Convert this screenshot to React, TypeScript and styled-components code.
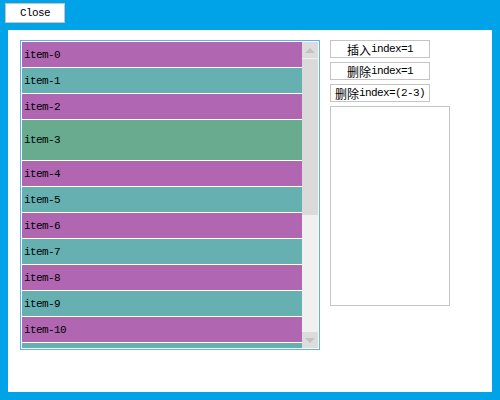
import React from 'react'
import styled, { createGlobalStyle } from 'styled-components'

const GlobalStyle = createGlobalStyle`
  html, body {
    margin: 0;
    padding: 0;
    background: #00a3e8;
  }
  body {
    width: 500px;
    height: 400px;
    overflow: hidden;
    font-family: "Liberation Mono", "Noto Sans CJK SC", monospace;
  }
`

const items = Array.from({ length: 12 }, (_, i) => i)

const itemColor = (i: number) => {
  if (i === 3) return '#68ab8e'
  return i % 2 === 0 ? '#b066b0' : '#66b0b2'
}

const App = () => {
  return (
    <Page>
      <GlobalStyle />
      <CloseButton>Close</CloseButton>
      <Panel>
        <ListBox>
          <ItemList>
            {items.map((i) => (
              <Item key={i} $bg={itemColor(i)} $tall={i === 3}>
                item-{i}
              </Item>
            ))}
          </ItemList>
          <ScrollBar>
            <ArrowButton>
              <ArrowUp />
            </ArrowButton>
            <Thumb />
            <Track />
            <ArrowButton>
              <ArrowDown />
            </ArrowButton>
          </ScrollBar>
        </ListBox>
        <Side>
          <ActionButton>
            <Cjk>插入</Cjk>index=1
          </ActionButton>
          <ActionButton>
            <Cjk>删除</Cjk>index=1
          </ActionButton>
          <ActionButton>
            <Cjk>删除</Cjk>index=(2-3)
          </ActionButton>
          <LogBox />
        </Side>
      </Panel>
    </Page>
  )
}

const Page = styled.div`
  display: flex;
  flex-direction: column;
  align-items: flex-start;
  padding: 3px 0 0 5px;
`

const CloseButton = styled.div`
  box-sizing: border-box;
  width: 60px;
  height: 20px;
  border: 1px solid #c4c4c4;
  background: #fff;
  display: flex;
  align-items: center;
  justify-content: center;
  font-size: 11px;
  letter-spacing: -0.6px;
  color: #000;
`

const Panel = styled.div`
  box-sizing: border-box;
  margin: 7px 0 0 3px;
  width: 484px;
  height: 362px;
  background: #fff;
  padding: 10px 0 0 12px;
  display: flex;
  gap: 10px;
  align-items: flex-start;
`

const ListBox = styled.div`
  box-sizing: border-box;
  width: 300px;
  height: 310px;
  border: 1px solid #5cb0f5;
  padding: 1px;
  display: flex;
  background: #fff;
`

const ItemList = styled.div`
  width: 280px;
  height: 306px;
  overflow: hidden;
  display: flex;
  flex-direction: column;
  gap: 1px;
`

const Item = styled.div<{ $bg: string; $tall: boolean }>`
  flex: none;
  height: ${(p) => (p.$tall ? 40 : 25)}px;
  background: ${(p) => p.$bg};
  display: flex;
  align-items: center;
  padding-left: 2px;
  font-size: 11px;
  letter-spacing: -0.6px;
  color: #000;
`

const ScrollBar = styled.div`
  width: 16px;
  height: 306px;
  display: flex;
  flex-direction: column;
  background: #f0f0f0;
`

const ArrowButton = styled.div`
  flex: none;
  height: 16px;
  background: #dcdcdc;
  display: flex;
  align-items: center;
  justify-content: center;
`

const ArrowUp = styled.div`
  width: 0;
  height: 0;
  border-left: 5px solid transparent;
  border-right: 5px solid transparent;
  border-bottom: 5px solid #c2c2c2;
`

const ArrowDown = styled.div`
  width: 0;
  height: 0;
  border-left: 5px solid transparent;
  border-right: 5px solid transparent;
  border-top: 5px solid #c2c2c2;
`

const Thumb = styled.div`
  flex: none;
  margin-top: 1px;
  height: 156px;
  background: #dadada;
`

const Track = styled.div`
  flex: 1;
`

const Side = styled.div`
  display: flex;
  flex-direction: column;
  gap: 4px;
`

const ActionButton = styled.div`
  box-sizing: border-box;
  width: 100px;
  height: 18px;
  border: 1px solid #c4c4c4;
  background: #fff;
  display: flex;
  align-items: center;
  justify-content: center;
  font-size: 11px;
  letter-spacing: -0.6px;
  color: #000;
  white-space: nowrap;
`

const Cjk = styled.span`
  font-family: "Noto Sans CJK SC", sans-serif;
  font-size: 12px;
  letter-spacing: 0;
`

const LogBox = styled.div`
  box-sizing: border-box;
  width: 120px;
  height: 200px;
  border: 1px solid #c4c4c4;
  background: #fff;
`

export default App
